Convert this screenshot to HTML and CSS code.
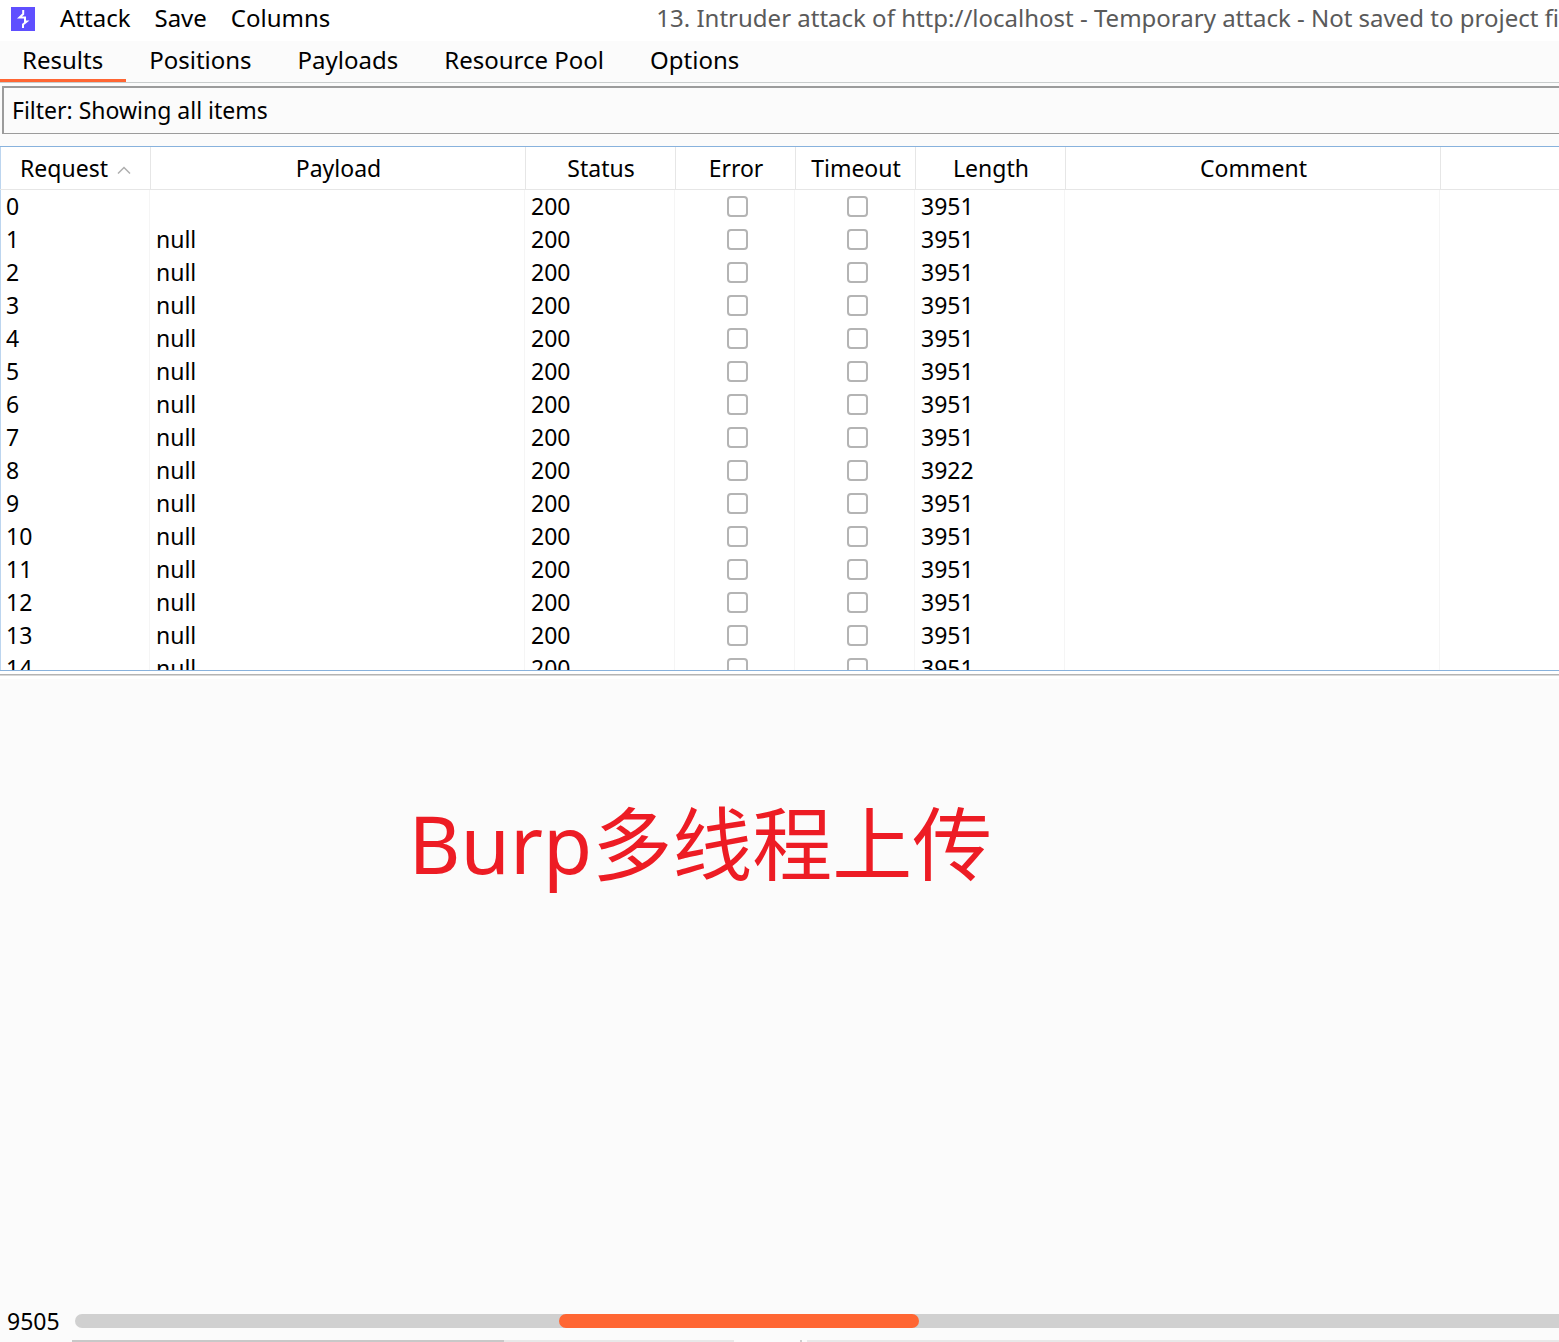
FILE: index.html
```html
<!DOCTYPE html>
<html lang="zh-CN">
<head>
<meta charset="utf-8">
<title>Intruder attack</title>
<link rel="stylesheet" href="styles.css">
</head>
<body>
<header class="titlebar">
  <svg class="logo" viewBox="0 0 24 24" aria-hidden="true"><rect width="24" height="24" fill="#5f4fff"/><path d="M12.200 3v4L8.500 10.500H14v4h1.700L12 17.500V21" fill="none" stroke="#fff" stroke-width="2"/></svg>
  <nav class="menu">
    <button type="button">Attack</button>
    <button type="button">Save</button>
    <button type="button">Columns</button>
  </nav>
  <h1 class="window-title">13. Intruder attack of http://localhost - Temporary attack - Not saved to project file</h1>
</header>
<nav class="tabs">
  <button type="button" class="tab active">Results</button>
  <button type="button" class="tab">Positions</button>
  <button type="button" class="tab">Payloads</button>
  <button type="button" class="tab">Resource Pool</button>
  <button type="button" class="tab">Options</button>
</nav>
<button type="button" class="filter">Filter: Showing all items</button>
<main class="split">
  <section class="results">
    <table>
      <colgroup><col class="w-m"><col class="w-l"><col class="w-m"><col class="w-s"><col class="w-s"><col class="w-m"><col class="w-l"><col></colgroup>
      <thead>
        <tr><th>Request<svg class="sort" viewBox="0 0 14 8" aria-hidden="true"><path d="M1 7.500L7 1.500L13 7.500" fill="none" stroke="#afafaf" stroke-width="1.500"/></svg></th><th>Payload</th><th>Status</th><th>Error</th><th>Timeout</th><th>Length</th><th>Comment</th><th></th></tr>
      </thead>
      <tbody id="rows"></tbody>
    </table>
  </section>
  <section class="detail"><p class="caption">Burp多线程上传</p></section>
</main>
<footer class="status">
  <span>9505</span>
  <div class="track" role="progressbar" aria-label="Attack progress"><div class="bar" style="margin-left:32.6%;width:24.3%"></div></div>
</footer>
<div class="strip"><i class="strip-dark"></i><i class="strip-mid"></i><i class="strip-tick"></i><i class="strip-rest"></i></div>
<script src="rows.js"></script>
</body>
</html>
```
FILE: styles.css
```css
* { box-sizing: border-box; }
body {
  margin: 0;
  height: 100vh;
  display: flex;
  flex-direction: column;
  overflow: hidden;
  background: #fbfbfb;
  color: #000;
  font: 23px/32px "Noto Sans", "Noto Sans CJK SC", sans-serif;
}
button {
  font: inherit;
  color: inherit;
  background: none;
  border: 0;
  padding: 0;
  white-space: nowrap;
}
.titlebar {
  flex: none;
  display: flex;
  align-items: center;
  height: 41px;
  padding: 0 0 3px 11px;
  background: #fff;
  font-size: 24px;
  overflow: hidden;
}
.logo { flex: none; width: 24px; height: 24px; }
.menu { flex: none; display: flex; gap: 24px; margin-left: 25px; padding-bottom: 2px; }
.window-title {
  flex: none;
  margin: 0 0 0 326px;
  padding-bottom: 2px;
  font-size: 24px;
  font-weight: 400;
  color: #5a5a5a;
  white-space: nowrap;
}
.tabs {
  flex: none;
  display: flex;
  height: 42px;
  border-bottom: 1px solid #c8cccc;
  font-size: 24px;
}
.tab { padding: 0 23px 1px; border-bottom: 3px solid transparent; }
.tab.active { padding-left: 22px; border-color: #ff6633; }
.filter {
  flex: none;
  height: 48px;
  margin: 3px 0 12px 2px;
  padding: 0 8px 2px;
  border: solid #9b9b9b;
  border-width: 2px 0 1px 2px;
  text-align: left;
}
.split { flex: 1; min-height: 0; display: flex; flex-direction: column; }
.results {
  flex: 0 0 45.4%;
  overflow: hidden;
  background: #fff;
  border: solid #88b2dd;
  border-width: 1px 0 1px 0;
  box-shadow: inset 1px 0 #bcd5ef;
}
table { width: 100%; table-layout: fixed; border-collapse: separate; border-spacing: 0; }
.w-s { width: 120px; }
.w-m { width: 150px; }
.w-l { width: 375px; }
th {
  height: 43px;
  padding: 0 0 0 1px;
  font-weight: 400;
  white-space: nowrap;
  border-bottom: 1px solid #e6e6e6;
}
th + th { border-left: 1px solid #e6e6e6; }
.sort { width: 14px; height: 8px; margin-left: 9px; vertical-align: 3px; }
td {
  height: 33px;
  padding: 0 6px;
  line-height: 33px;
  border-right: 1px solid #f5f5f5;
}
td:last-child { border-right: 0; }
.check { padding-right: 0; }
.check input {
  appearance: none;
  display: block;
  width: 21px;
  height: 21px;
  margin: 0 auto;
  border: 2px solid #b4b4b4;
  border-radius: 4px;
  background: #fff;
}
.detail {
  flex: 1;
  margin-top: 3px;
  border-top: 1px solid #b4b4b4;
  box-shadow: 0 -3px #fff, inset 0 1px #d8d8d8, inset 0 4px #fff;
}
.caption {
  margin: 110px 0 0 26.2%;
  font-size: 80px;
  line-height: 116px;
  color: #ed1c24;
  white-space: nowrap;
}
.status {
  flex: none;
  display: flex;
  align-items: center;
  gap: 15px;
  height: 38px;
  padding-left: 7px;
}
.track { flex: 1; height: 14px; border-radius: 7px 0 0 7px; background: #d0d0d0; }
.bar { height: 14px; border-radius: 7px; background: #ff6633; }
.strip { flex: none; display: flex; height: 2px; padding-left: 72px; }
.strip-dark { width: 432px; background: #c8c8c8; }
.strip-mid { width: 230px; background: #e8e8e8; }
.strip-tick { width: 2px; margin: 0 5px 0 66px; background: #ccc; }
.strip-rest { flex: 1; background: #e8e8e8; }
```
FILE: rows.js
```js
const rows = document.getElementById("rows");
for (let n = 0; n < 15; n++) {
  const tr = rows.insertRow();
  const cells = [n, n ? "null" : "", 200, null, null, n === 8 ? 3922 : 3951, "", ""];
  cells.forEach((value, i) => {
    const td = tr.insertCell();
    if (value === null) {
      const box = document.createElement("input");
      box.type = "checkbox";
      box.setAttribute("aria-label", (i === 3 ? "Error " : "Timeout ") + n);
      td.className = "check";
      td.append(box);
    } else {
      td.textContent = value;
    }
  });
}
```
